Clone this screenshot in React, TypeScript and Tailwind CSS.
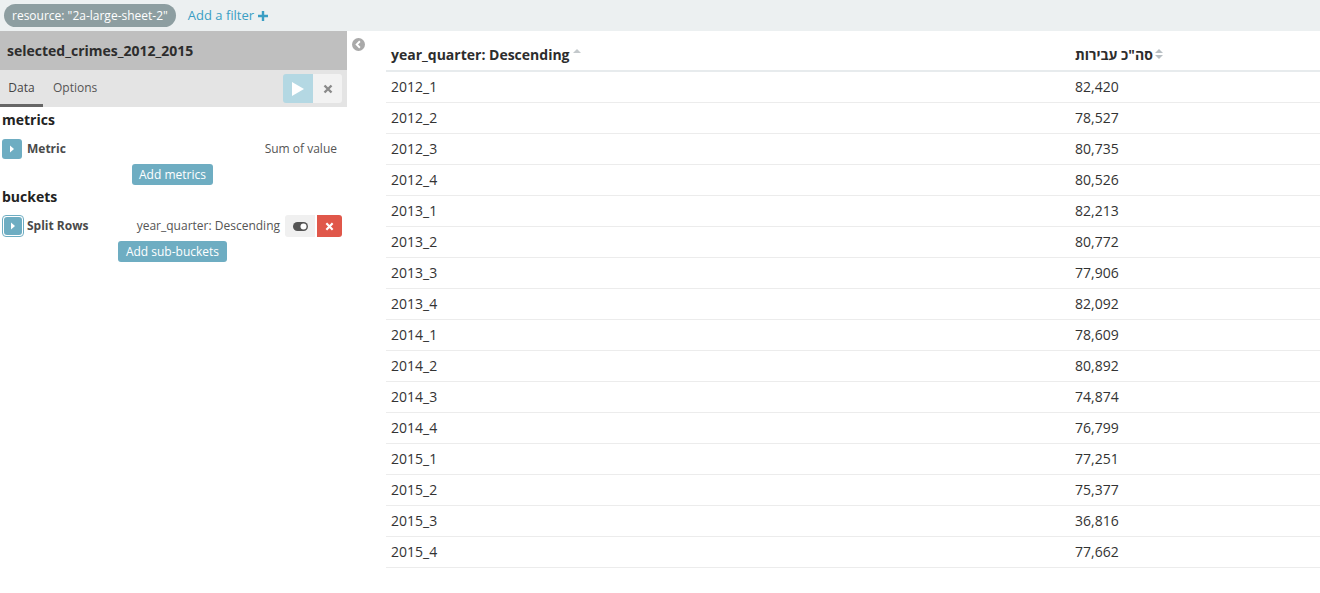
import type { ReactNode } from 'react';

const ROWS = [
  ['2012_1', '82,420'],
  ['2012_2', '78,527'],
  ['2012_3', '80,735'],
  ['2012_4', '80,526'],
  ['2013_1', '82,213'],
  ['2013_2', '80,772'],
  ['2013_3', '77,906'],
  ['2013_4', '82,092'],
  ['2014_1', '78,609'],
  ['2014_2', '80,892'],
  ['2014_3', '74,874'],
  ['2014_4', '76,799'],
  ['2015_1', '77,251'],
  ['2015_2', '75,377'],
  ['2015_3', '36,816'],
  ['2015_4', '77,662'],
];

const FONT = { fontFamily: '"Open Sans", "Noto Sans", "Noto Sans Hebrew", sans-serif' };

function Caret(): ReactNode {
  return (
    <svg width="6" height="8" viewBox="0 0 6 8">
      <path d="M1 0.5 L5 4 L1 7.5 Z" fill="white" />
    </svg>
  );
}

function FilterBar(): ReactNode {
  return (
    <div className="flex h-[31px] items-center gap-3 bg-[#ecf0f1] px-1">
      <span className="rounded-full bg-[#8d9ea1] px-[8px] py-[3px] text-[12px] leading-[17px] text-white">
        resource: "2a-large-sheet-2"
      </span>
      <span className="flex items-center gap-1 text-[13px] text-[#3a9ec4]">
        Add a filter
        <svg width="10" height="10" viewBox="0 0 10 10">
          <path d="M3.8 0h2.4v3.8H10v2.4H6.2V10H3.8V6.2H0V3.8h3.8z" fill="#3a9ec4" />
        </svg>
      </span>
    </div>
  );
}

function Sidebar(): ReactNode {
  return (
    <div className="w-[347px] shrink-0">
      <div className="flex h-[39px] items-center bg-[#bfbfbf] px-[7px] text-[14px] font-bold text-[#2d2d2d]">
        selected_crimes_2012_2015
      </div>
      <div className="flex h-[37px] items-stretch bg-[#e4e4e4]">
        <div className="flex w-[43px] items-center justify-center border-b-[3px] border-[#666] pt-[1px] text-[12px] text-[#444]">
          Data
        </div>
        <div className="flex items-center px-[10px] pb-[2px] text-[12px] text-[#555]">Options</div>
        <div className="ml-auto mr-[5px] flex items-center">
          <div className="flex h-[29px] w-[30px] items-center justify-center rounded-l-[3px] bg-[#b4d8e3]">
            <svg width="12" height="14" viewBox="0 0 12 14">
              <path d="M0 0 L12 7 L0 14 Z" fill="white" />
            </svg>
          </div>
          <div className="flex h-[29px] w-[29px] items-center justify-center rounded-r-[3px] bg-[#f2f2f2]">
            <svg width="10" height="10" viewBox="0 0 10 10">
              <path d="M1.5 1.5 L8.5 8.5 M8.5 1.5 L1.5 8.5" stroke="#8a8a8a" strokeWidth="2.4" />
            </svg>
          </div>
        </div>
      </div>

      <div className="px-[2px] pt-[3px] text-[#444]">
        <div className="text-[14px] font-bold leading-[20px] text-[#222]">metrics</div>
        <div className="mt-[9px] flex h-[20px] items-center">
          <div className="flex h-[20px] w-[20px] items-center justify-center rounded-[3px] bg-[#6eadc2]">
            <Caret />
          </div>
          <span className="ml-[5px] text-[12px] font-bold text-[#4a4a4a]">Metric</span>
          <span className="ml-auto mr-[8px] text-[12px] text-[#555]">Sum of value</span>
        </div>
        <div className="mt-[5px] flex justify-center">
          <span className="ml-[-2px] rounded-[3px] bg-[#6eadc2] px-[7px] py-[2px] text-[12px] leading-[17px] text-white">
            Add metrics
          </span>
        </div>
        <div className="mt-[2px] text-[14px] font-bold leading-[20px] text-[#222]">buckets</div>
        <div className="mt-[8px] flex h-[22px] items-center">
          <div className="flex h-[22px] w-[22px] items-center justify-center rounded-[4px] border border-[#6eadc2] bg-white p-[1px]">
            <div className="flex h-full w-full items-center justify-center rounded-[3px] bg-[#6eadc2]">
              <Caret />
            </div>
          </div>
          <span className="ml-[3px] text-[12px] font-bold text-[#4a4a4a]">Split Rows</span>
          <span className="ml-auto mr-[5px] text-[12px] text-[#555]">year_quarter: Descending</span>
          <div className="flex h-[22px] w-[30px] items-center justify-center rounded-l-[3px] bg-[#f0f0f0]">
            <svg width="15" height="9" viewBox="0 0 15 9">
              <rect x="0" y="0" width="15" height="9" rx="4.5" fill="#555" />
              <circle cx="10.5" cy="4.5" r="3" fill="white" />
            </svg>
          </div>
          <div className="ml-[2px] mr-[3px] flex h-[22px] w-[25px] items-center justify-center rounded-r-[3px] bg-[#e0574a]">
            <svg width="9" height="9" viewBox="0 0 10 10">
              <path d="M1.5 1.5 L8.5 8.5 M8.5 1.5 L1.5 8.5" stroke="white" strokeWidth="2.4" />
            </svg>
          </div>
        </div>
        <div className="mt-[4px] flex justify-center">
          <span className="ml-[-2px] rounded-[3px] bg-[#6eadc2] px-[8px] py-[2px] text-[12px] leading-[17px] text-white">
            Add sub-buckets
          </span>
        </div>
      </div>
    </div>
  );
}

function SortUp(): ReactNode {
  return (
    <svg width="8" height="6" viewBox="0 0 8 6" className="ml-[3px] mb-[6px]">
      <path d="M0 5 L4 1 L8 5 Z" fill="#c4c9cc" />
    </svg>
  );
}

function SortBoth(): ReactNode {
  return (
    <svg width="8" height="12" viewBox="0 0 8 12" className="ml-[2px]">
      <path d="M0 5 L4 1 L8 5 Z M0 7 L4 11 L8 7 Z" fill="#b8bfc4" />
    </svg>
  );
}

function DataTable(): ReactNode {
  return (
    <div className="flex-1 pt-[6px]">
      <div className="grid grid-cols-[684px_1fr] border-b-2 border-[#e7ebed] text-[14px] font-bold text-[#2d2d2d]">
        <div className="flex h-[33px] items-center px-[5px] pt-[1px]">
          year_quarter: Descending
          <SortUp />
        </div>
        <div className="flex h-[33px] items-center px-[5px] pt-[1px]">
          <span dir="rtl">סה"כ עבירות</span>
          <SortBoth />
        </div>
      </div>
      {ROWS.map(([q, v]) => (
        <div key={q} className="grid h-[31px] grid-cols-[684px_1fr] items-center border-b border-[#ececec] pb-[2px] text-[14px] text-[#333]">
          <div className="px-[5px]">{q}</div>
          <div className="px-[5px]">{v}</div>
        </div>
      ))}
    </div>
  );
}

export default function App(): ReactNode {
  return (
    <div className="h-[593px] w-[1320px] overflow-hidden bg-white" style={FONT}>
      <FilterBar />
      <div className="flex">
        <Sidebar />
        <div className="flex w-[39px] shrink-0 justify-center pt-[7px]">
          <svg width="13" height="13" viewBox="0 0 14 14" className="ml-[-16px]">
            <circle cx="7" cy="7" r="7" fill="#a9a9a9" />
            <path d="M8.5 3.5 L5 7 L8.5 10.5" stroke="white" strokeWidth="2" fill="none" />
          </svg>
        </div>
        <DataTable />
      </div>
    </div>
  );
}
